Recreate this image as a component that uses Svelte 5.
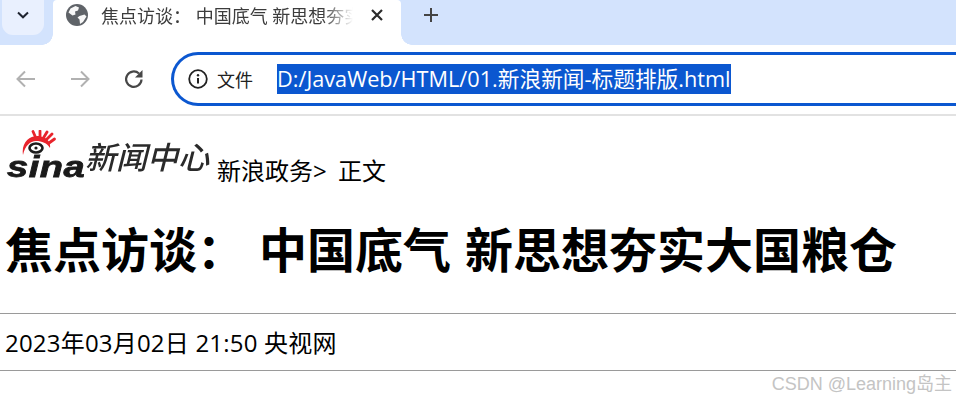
<script>
  const url = 'D:/JavaWeb/HTML/01.新浪新闻-标题排版.html';
</script>

<div class="chrome">
  <div class="tabstrip">
    <div class="tabsearch">
      <svg width="14" height="14" viewBox="0 0 14 14"><path d="M2 4.500 7 9.300 12 4.500" fill="none" stroke="#1f2430" stroke-width="2"/></svg>
    </div>
    <div class="tab">
      <svg class="globe" width="22" height="22" viewBox="0 0 22 22">
        <circle cx="11" cy="11" r="11" fill="#5f6368"/>
        <path d="M4.500 4.500 9.500 2 13 3.500 12 6.500 9 7.500 9.500 10.500 6.500 11.500 2.500 8.500ZM13.500 12l5-1.500 2 2-3.500 5.500-3 2-.5-4.500-2-2Z" fill="#fff" opacity=".95"/>
      </svg>
      <span class="tabtitle">焦点访谈： 中国底气 新思想夯实大国粮仓</span>
      <svg class="close" width="14" height="14" viewBox="0 0 14 14"><path d="M2 2 12 12M12 2 2 12" stroke="#2b2b2b" stroke-width="2.200"/></svg>
    </div>
    <svg class="plus" width="18" height="18" viewBox="0 0 18 18"><path d="M9 2v14M2 9h14" stroke="#444" stroke-width="2"/></svg>
  </div>

  <div class="toolbar">
    <svg class="nav first" width="22" height="22" viewBox="0 0 22 22"><path d="M20 11H3M10 3.500 2.500 11 10 18.500" fill="none" stroke="#b1b1b1" stroke-width="2"/></svg>
    <svg class="nav" width="22" height="22" viewBox="0 0 22 22"><path d="M2 11h17M12 3.500 19.500 11 12 18.500" fill="none" stroke="#b1b1b1" stroke-width="2"/></svg>
    <svg class="nav" width="22" height="22" viewBox="0 0 22 22"><path d="M18.500 11.500A7.700 7.700 0 1 1 16 5.500" fill="none" stroke="#474747" stroke-width="2.200"/><path d="M19.500 2v7.500H12Z" fill="#474747"/></svg>
    <div class="omnibox">
      <svg width="20" height="20" viewBox="0 0 20 20"><circle cx="10" cy="10" r="8.800" fill="none" stroke="#222" stroke-width="1.800"/><path d="M10 9v5.500" stroke="#222" stroke-width="2"/><circle cx="10" cy="6.200" r="1.200" fill="#222"/></svg>
      <span class="file">文件</span>
      <span class="url">{url}</span>
    </div>
  </div>
</div>

<main class="page">
  <div class="crumbs">
    <div class="logo">
      <span class="sina">sina</span>
      <svg class="eye" width="34" height="27" viewBox="0 0 34 27">
        <path d="M1 25C-1 12 8 5 17 6 24 7 29 11 28 18 25 13 20 11 14 11 8 11 3 16 1 25Z" fill="#e8242c"/>
        <path d="M13 6 11 1.500M18 6 18 1M22 7 25 2M25 9 30 4M27 13 32.500 9" stroke="#e8242c" stroke-width="2.800" stroke-linecap="round"/>
        <ellipse cx="14" cy="18" rx="6.500" ry="4.500" fill="#fff" stroke="#1c1c1c" stroke-width="2.600"/>
        <circle cx="14" cy="18" r="1.600" fill="#1c1c1c"/>
      </svg>
      <span class="news">新闻中心</span>
    </div>
    <span class="trail">新浪政务&gt; 正文</span>
  </div>
  <h1>焦点访谈： 中国底气 新思想夯实大国粮仓</h1>
  <hr />
  <p class="meta">2023年03月02日 21:50 央视网</p>
  <hr />
  <div class="markrow"><span class="mark">CSDN @Learning岛主</span></div>
</main>

<style>
  :global(body) {
    margin: 0;
    background: #fff;
    overflow: hidden;
  }
  .chrome, .page {
    font-family: "Open Sans", "Noto Sans CJK SC", sans-serif;
  }
  .tabstrip {
    height: 45px;
    background: #d3e3fd;
    display: flex;
    align-items: flex-start;
  }
  .tabsearch {
    width: 42px;
    height: 35px;
    margin-left: 2px;
    background: #e9f0fe;
    border-radius: 0 0 11px 11px;
    display: flex;
    align-items: center;
    justify-content: center;
    padding-bottom: 5px;
    box-sizing: border-box;
  }
  .tab {
    margin-left: 9px;
    width: 348px;
    height: 45px;
    background: #fff;
    border-radius: 4px 4px 0 0;
    display: flex;
    align-items: flex-start;
    position: relative;
  }
  .tab::before,
  .tab::after {
    content: "";
    position: absolute;
    bottom: 0;
    width: 11px;
    height: 11px;
  }
  .tab::before {
    left: -11px;
    background: radial-gradient(circle at 0 0, transparent 10.500px, #fff 11px);
  }
  .tab::after {
    right: -11px;
    background: radial-gradient(circle at 100% 0, transparent 10.500px, #fff 11px);
  }
  .globe {
    margin: 4px 0 0 13px;
    flex: none;
  }
  .tabtitle {
    margin: 3px 0 0 13px;
    width: 252px;
    font-size: 18px;
    line-height: 26px;
    color: #3c3c3c;
    white-space: nowrap;
    overflow: hidden;
    -webkit-mask-image: linear-gradient(90deg, #000 88%, transparent);
    mask-image: linear-gradient(90deg, #000 88%, transparent);
  }
  .close {
    margin: 8px 0 0 17px;
    flex: none;
  }
  .plus {
    margin: 6px 0 0 21px;
    flex: none;
  }
  .toolbar {
    height: 69px;
    display: flex;
    align-items: center;
    border-bottom: 2px solid #e2e2e2;
  }
  .nav {
    flex: none;
    margin-left: 32px;
    margin-top: -1px;
  }
  .nav.first {
    margin-left: 15px;
  }
  .omnibox {
    flex: 1;
    margin-left: 26px;
    margin-top: -2px;
    height: 54px;
    box-sizing: border-box;
    border: 3px solid #0b57d0;
    border-right: none;
    border-radius: 27px 0 0 27px;
    display: flex;
    align-items: center;
    padding-left: 14px;
    min-width: 0;
  }
  .file {
    margin-left: 9px;
    font-size: 18px;
    color: #222;
  }
  .url {
    margin-left: 24px;
    background: #0b57d0;
    color: #fff;
    font-size: 21.700px;
    line-height: 30px;
    white-space: nowrap;
  }
  .page {
    color: #000;
  }
  .crumbs {
    display: flex;
    align-items: flex-end;
    height: 72px;
    padding-left: 6px;
  }
  .logo {
    width: 211px;
    height: 58px;
    position: relative;
    flex: none;
    filter: blur(.4px);
  }
  .eye {
    position: absolute;
    left: 16px;
    top: 0;
  }
  .sina {
    position: absolute;
    left: 1px;
    top: 17px;
    font: italic 700 38px/40px "Liberation Sans", sans-serif;
    letter-spacing: .5px;
    color: #1a1a1a;
    -webkit-text-stroke: 1px #1a1a1a;
    transform: scaleY(.8);
  }
  .news {
    position: absolute;
    left: 79px;
    top: 6px;
    font: italic 500 31px/40px "Noto Sans CJK SC", sans-serif;
    color: #2a2a2a;
  }
  .trail {
    font-size: 24px;
    line-height: 34px;
    word-spacing: 5px;
    white-space: nowrap;
  }
  h1 {
    margin: 27px 0 0 5px;
    font-size: 48px;
    line-height: 70px;
    font-weight: 700;
    word-spacing: 1.500px;
    white-space: nowrap;
  }
  hr {
    margin: 0;
    height: 1px;
    border: none;
    background: #9a9a9a;
  }
  h1 + hr {
    margin-top: 28px;
  }
  .meta {
    margin: 0 0 0 5px;
    padding-top: 2px;
    font-size: 24px;
    line-height: 54px;
    letter-spacing: .2px;
    white-space: nowrap;
  }
  .markrow {
    display: flex;
    justify-content: flex-end;
    padding: 1px 4px 0 0;
  }
  .mark {
    font-family: "Liberation Sans", "Noto Sans CJK SC", sans-serif;
    font-size: 18px;
    line-height: 24px;
    color: #c4c4c4;
    white-space: nowrap;
  }
</style>
